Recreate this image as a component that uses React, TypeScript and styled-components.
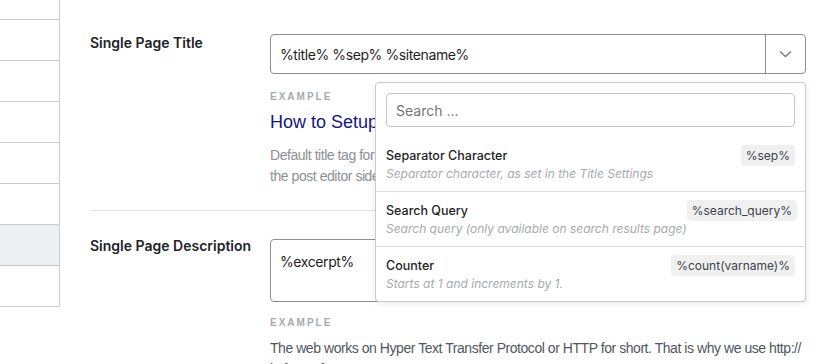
import React from "react";
import styled, { createGlobalStyle } from "styled-components";

const GlobalStyle = createGlobalStyle`
  html, body {
    margin: 0;
    padding: 0;
    background: #fff;
    overflow: hidden;
  }
  body {
    font-family: "Inter", "Liberation Sans", Arial, sans-serif;
    color: #1e1e1e;
  }
`;

const Page = styled.div`
  display: flex;
  align-items: flex-start;
  width: 834px;
  height: 364px;
  overflow: hidden;
`;

const Sidebar = styled.div`
  width: 59px;
  flex-shrink: 0;
  border-right: 1px solid #c9cacc;
  display: flex;
  flex-direction: column;
`;

const SideRow = styled.div<{ $active?: boolean; $first?: boolean }>`
  height: ${(p) => (p.$first ? "19px" : "40px")};
  border-bottom: 1px solid #c9cacc;
  background: ${(p) => (p.$active ? "#eeeff2" : "#fff")};
`;

const Main = styled.div`
  flex: 1;
  padding-left: 30px;
  display: flex;
  flex-direction: column;
`;

const Section = styled.div<{ $top: number; $divider?: boolean }>`
  display: grid;
  grid-template-columns: 180px 536px;
  padding-top: ${(p) => p.$top}px;
  padding-bottom: 23px;
  border-bottom: ${(p) => (p.$divider ? "1px solid #e2e3e5" : "none")};
  width: 716px;
`;

const Label = styled.div`
  font-size: 14px;
  line-height: 20px;
  font-weight: 600;
  color: #1d2327;
`;

const Field = styled.div`
  position: relative;
  display: flex;
  flex-direction: column;
`;

const Select = styled.div`
  display: flex;
  height: 38px;
  margin-top: 1px;
  border: 1px solid #8c8f94;
  border-radius: 4px;
`;

const SelectValue = styled.div`
  flex: 1;
  display: flex;
  align-items: center;
  padding-left: 9px;
  font-size: 14px;
  letter-spacing: -0.4px;
  color: #1e1e1e;
`;

const SelectToggle = styled.div`
  width: 39px;
  border-left: 1px solid #8c8f94;
  display: flex;
  align-items: center;
  justify-content: center;
`;

const TextArea = styled.div`
  margin-top: 3px;
  height: 63px;
  box-sizing: border-box;
  border: 1px solid #8c8f94;
  border-radius: 4px;
  padding: 12px 9px 0;
  font-size: 14px;
  line-height: 20px;
  letter-spacing: -0.4px;
  color: #1e1e1e;
`;

const Eyebrow = styled.div<{ $gap: number }>`
  margin-top: ${(p) => p.$gap}px;
  font-family: "Liberation Sans", Arial, sans-serif;
  font-size: 10px;
  line-height: 14px;
  font-weight: 700;
  letter-spacing: 2px;
  color: #a7aaad;
`;

const PreviewTitle = styled.div`
  margin-top: 6px;
  font-family: "Liberation Sans", Arial, sans-serif;
  font-size: 18px;
  line-height: 24px;
  color: #15148a;
`;

const Help = styled.div<{ $dark?: boolean }>`
  margin-top: ${(p) => (p.$dark ? "8px" : "11px")};
  font-family: "Liberation Sans", Arial, sans-serif;
  font-size: 14px;
  line-height: 21px;
  letter-spacing: -0.45px;
  white-space: nowrap;
  color: ${(p) => (p.$dark ? "#50575e" : "#8c8f94")};
`;

const Dropdown = styled.div`
  position: absolute;
  top: 49px;
  left: 105px;
  right: 0;
  box-sizing: border-box;
  background: #fff;
  border: 1px solid #c9cacc;
  border-radius: 4px;
  box-shadow: 0 2px 6px rgba(0, 0, 0, 0.08);
  z-index: 2;
`;

const SearchWrap = styled.div`
  padding: 10px;
`;

const SearchBox = styled.div`
  height: 34px;
  box-sizing: border-box;
  border: 1px solid #c3c4c7;
  border-radius: 4px;
  display: flex;
  align-items: center;
  padding-left: 9px;
  font-size: 14px;
  color: #757575;
`;

const Item = styled.div`
  display: flex;
  justify-content: space-between;
  align-items: flex-start;
  padding: 11px 10px 9px;
  & + & {
    border-top: 1px solid #dcdcde;
  }
`;

const ItemText = styled.div`
  display: flex;
  flex-direction: column;
  gap: 2px;
  white-space: nowrap;
`;

const ItemTitle = styled.div`
  font-size: 12.5px;
  line-height: 16px;
  font-weight: 500;
  color: #1e1e1e;
`;

const ItemDesc = styled.div`
  font-size: 12px;
  line-height: 16px;
  font-style: italic;
  color: #a7aaad;
`;

const Tag = styled.div`
  margin-top: -3px;
  height: 21px;
  flex-shrink: 0;
  display: flex;
  align-items: center;
  padding: 0 5px;
  border-radius: 4px;
  background: #f0f0f1;
  font-size: 12px;
  color: #3c434a;
`;

const variables = [
  {
    title: "Separator Character",
    desc: "Separator character, as set in the Title Settings",
    tag: "%sep%",
  },
  {
    title: "Search Query",
    desc: "Search query (only available on search results page)",
    tag: "%search_query%",
  },
  {
    title: "Counter",
    desc: "Starts at 1 and increments by 1.",
    tag: "%count(varname)%",
  },
];

const Chevron = () => (
  <svg width="13" height="8" viewBox="0 0 13 8">
    <path d="M1 1.5 L6.5 6.5 L12 1.5" fill="none" stroke="#787c82" strokeWidth="1.5" />
  </svg>
);

export default () => {
  return (
    <Page>
      <GlobalStyle />
      <Sidebar>
        <SideRow $first />
        <SideRow />
        <SideRow />
        <SideRow />
        <SideRow />
        <SideRow />
        <SideRow $active />
        <SideRow />
      </Sidebar>

      <Main>
        <Section $top={33} $divider>
          <Label>Single Page Title</Label>
          <Field>
            <Select>
              <SelectValue>%title% %sep% %sitename%</SelectValue>
              <SelectToggle>
                <Chevron />
              </SelectToggle>
            </Select>
            <Eyebrow $gap={16}>EXAMPLE</Eyebrow>
            <PreviewTitle>How to Setup Your Site Title and Tagline</PreviewTitle>
            <Help>
              Default title tag for single pages. This can be changed on a per-page basis on
              <br />
              the post editor sidebar.
            </Help>

            <Dropdown>
              <SearchWrap>
                <SearchBox>Search ...</SearchBox>
              </SearchWrap>
              {variables.map((v) => (
                <Item key={v.tag}>
                  <ItemText>
                    <ItemTitle>{v.title}</ItemTitle>
                    <ItemDesc>{v.desc}</ItemDesc>
                  </ItemText>
                  <Tag>{v.tag}</Tag>
                </Item>
              ))}
            </Dropdown>
          </Field>
        </Section>

        <Section $top={25}>
          <Label>Single Page Description</Label>
          <Field>
            <TextArea>%excerpt%</TextArea>
            <Eyebrow $gap={14}>EXAMPLE</Eyebrow>
            <Help $dark>
              The web works on Hyper Text Transfer Protocol or HTTP for short. That is why we use http://
              <br />
              in front of URLs.
            </Help>
          </Field>
        </Section>
      </Main>
    </Page>
  );
};
